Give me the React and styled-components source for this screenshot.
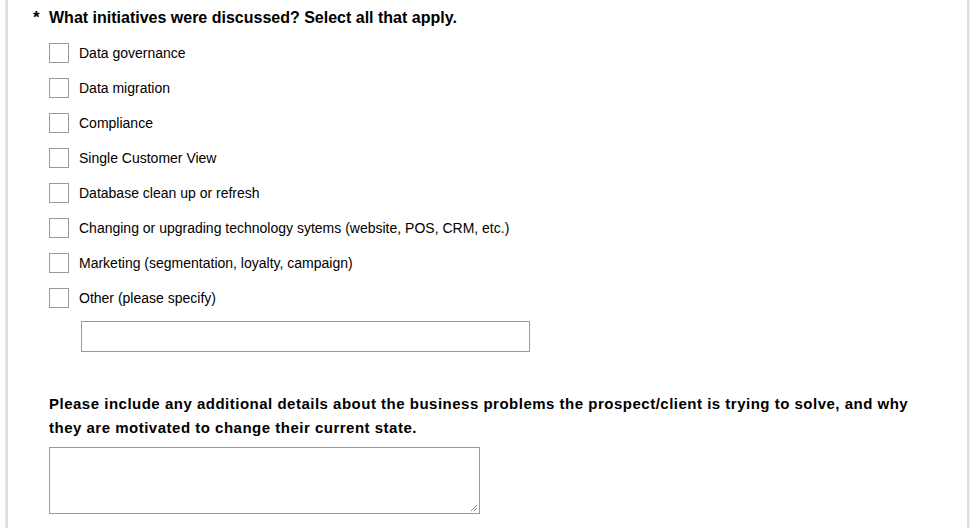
import React from "react";
import styled, { createGlobalStyle } from "styled-components";

const GlobalStyle = createGlobalStyle`
  body {
    margin: 0;
    background: #fff;
    font-family: "Liberation Sans", Arial, sans-serif;
    color: #000;
  }
`;

const Page = styled.div`
  width: 976px;
  height: 528px;
  overflow: hidden;
  background: #fff;
  padding: 0 7px 0 6px;
  box-sizing: border-box;
`;

const Card = styled.div`
  height: 100%;
  background: #fff;
  border-left: 2px solid #dcdcdc;
  border-right: 2px solid #dcdcdc;
  box-shadow: -1px 0 1px #eee, 1px 0 1px #eee;
  padding: 6px 0 0 25px;
  box-sizing: border-box;
`;

const Question = styled.div`
  display: flex;
  align-items: baseline;
  font-size: ${(p) => p.$size || 15}px;
  letter-spacing: ${(p) => p.$spacing || 0}px;
  font-weight: bold;
  line-height: 24px;
  margin-left: ${(p) => p.$indent || 0}px;
  margin-top: ${(p) => p.$top || 0}px;
  padding-right: 45px;
`;

const Star = styled.span`
  width: 16px;
  flex: none;
  font-size: 17px;
`;

const OptionList = styled.div`
  display: flex;
  flex-direction: column;
  gap: 15px;
  margin: 13px 0 0 16px;
`;

const Option = styled.label`
  display: flex;
  align-items: center;
  gap: 10px;
  font-size: 14px;
  height: 20px;
`;

const Box = styled.span`
  width: 18px;
  height: 18px;
  border: 1px solid #9b9b9b;
  background: #fff;
  flex: none;
`;

const TextInput = styled.div`
  width: 447px;
  height: 29px;
  border: 1px solid #9b9b9b;
  margin: 13px 0 0 48px;
`;

const TextArea = styled.div`
  position: relative;
  width: 429px;
  height: 65px;
  border: 1px solid #9b9b9b;
  margin: 7px 0 0 16px;
`;

const Grip = styled.svg`
  position: absolute;
  right: 1px;
  bottom: 1px;
`;

const options = [
  "Data governance",
  "Data migration",
  "Compliance",
  "Single Customer View",
  "Database clean up or refresh",
  "Changing or upgrading technology sytems (website, POS, CRM, etc.)",
  "Marketing (segmentation, loyalty, campaign)",
  "Other (please specify)",
];

const App = () => {
  return (
    <Page>
      <GlobalStyle />
      <Card>
        <Question $size={16}>
          <Star>*</Star>
          What initiatives were discussed? Select all that apply.
        </Question>
        <OptionList>
          {options.map((o) => (
            <Option key={o}>
              <Box />
              {o}
            </Option>
          ))}
        </OptionList>
        <TextInput />
        <Question $indent={16} $top={40} $spacing={0.5}>
          Please include any additional details about the business problems the
          prospect/client is trying to solve, and why they are motivated to
          change their current state.
        </Question>
        <TextArea>
          <Grip width="9" height="9" viewBox="0 0 9 9">
            <path d="M8 2 L2 8 M8 5 L5 8" stroke="#888" strokeWidth="1" />
          </Grip>
        </TextArea>
      </Card>
    </Page>
  );
};

export default App;
